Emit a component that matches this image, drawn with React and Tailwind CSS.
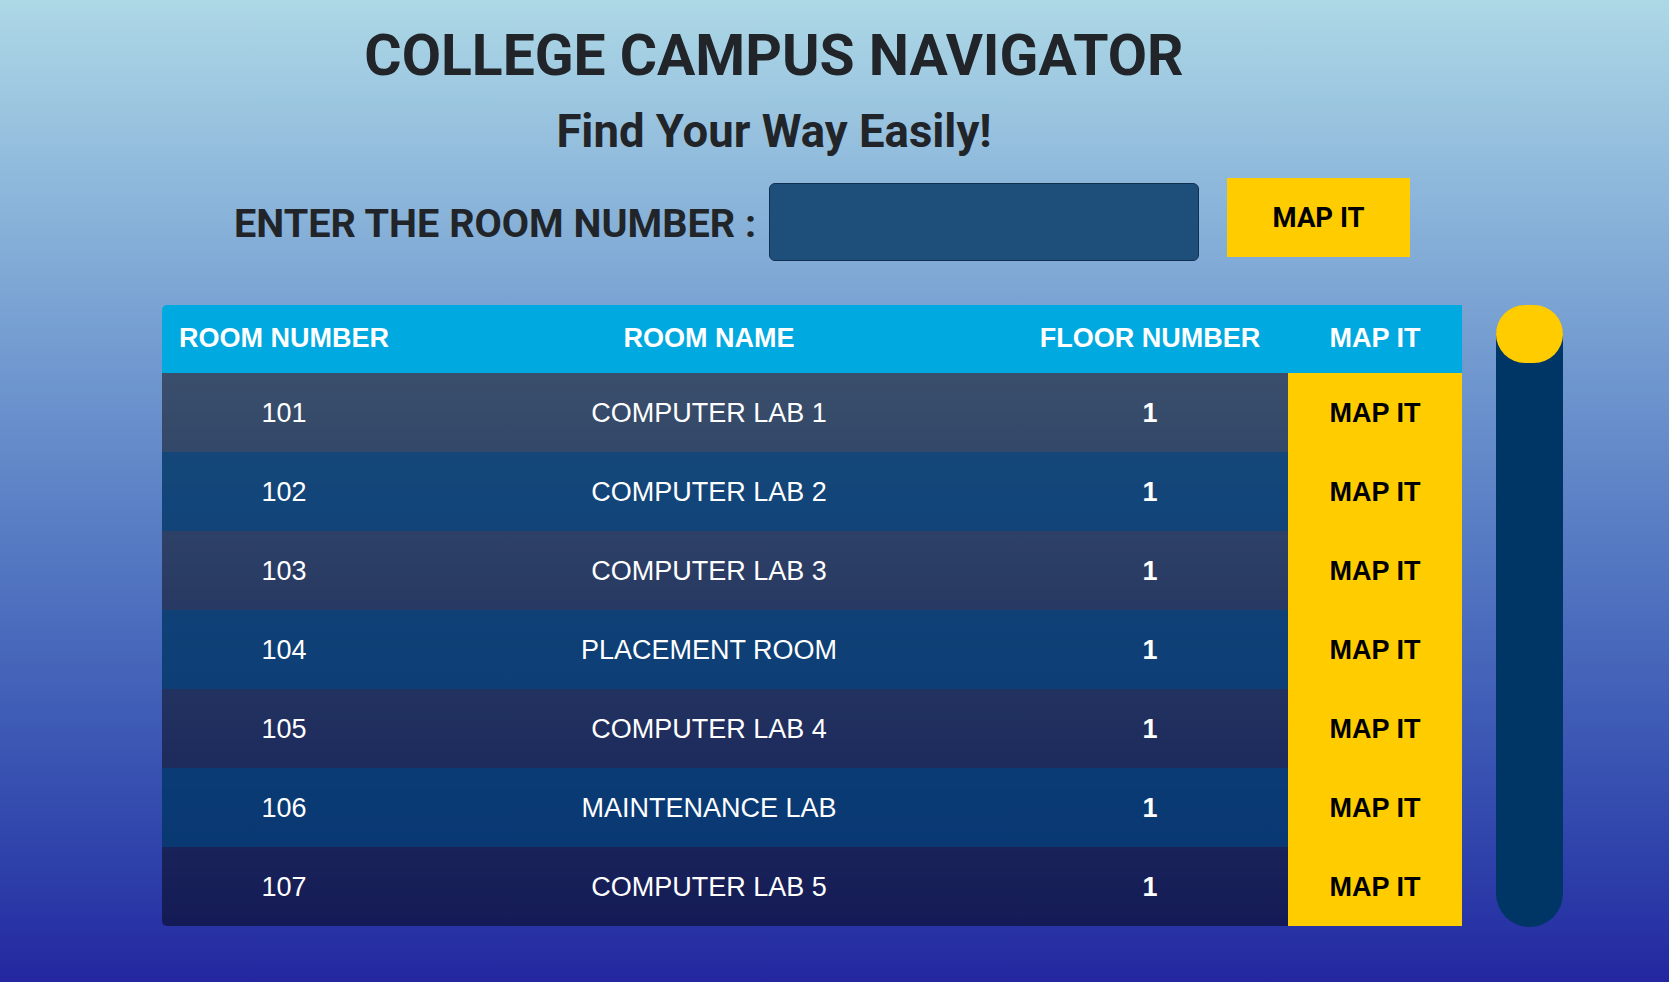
import React, { useState } from 'react'

const rooms = [
  { no: '101', name: 'COMPUTER LAB 1', floor: '1' },
  { no: '102', name: 'COMPUTER LAB 2', floor: '1' },
  { no: '103', name: 'COMPUTER LAB 3', floor: '1' },
  { no: '104', name: 'PLACEMENT ROOM', floor: '1' },
  { no: '105', name: 'COMPUTER LAB 4', floor: '1' },
  { no: '106', name: 'MAINTENANCE LAB', floor: '1' },
  { no: '107', name: 'COMPUTER LAB 5', floor: '1' },
]

const App = () => {
  const [room, setRoom] = useState('')

  return (
    <div className="h-[982px] w-full overflow-hidden bg-linear-to-b from-[#add8e6] to-[#2426a0] font-['Roboto',sans-serif] text-[#212529]">
      <div className="w-[1548px] pt-[28px] text-center">
        <h1 className="text-[57px] leading-[56px] font-bold">COLLEGE CAMPUS NAVIGATOR</h1>
        <h2 className="mt-[25px] text-[45.5px] leading-[45px] font-bold">Find Your Way Easily!</h2>
      </div>

      <div className="mt-[24px] flex items-start pl-[234px]">
        <label className="mt-[26px] text-[39.6px] leading-[40px] font-bold whitespace-nowrap">ENTER THE ROOM NUMBER :</label>
        <input
          value={room}
          onChange={(e) => setRoom(e.target.value)}
          className="mt-[5px] ml-[13px] h-[78px] w-[430px] rounded-[6px] border border-[#10304f] bg-[#1d4f7a] px-4 text-[28px] text-white outline-none"
        />
        <button className="ml-[28px] h-[79px] w-[183px] bg-[#ffcc00] text-[27.5px] font-bold text-black">MAP IT</button>
      </div>

      <div className="mt-[44px] flex items-start pl-[162px]">
        <div className="w-[1300px] overflow-hidden rounded-l-[5px] font-['Liberation_Sans',Arial,sans-serif] text-[27px] text-white">
          <table className="w-full table-fixed border-collapse">
            <colgroup>
              <col className="w-[244px]" />
              <col className="w-[606px]" />
              <col className="w-[276px]" />
              <col className="w-[174px]" />
            </colgroup>
            <thead>
              <tr className="h-[68px] bg-[#00a9e0] font-bold">
                <th className="p-0 pb-[2px] text-center">ROOM NUMBER</th>
                <th className="p-0 pb-[2px] text-center">ROOM NAME</th>
                <th className="p-0 pb-[2px] text-center">FLOOR NUMBER</th>
                <th className="p-0 pb-[2px] text-center">MAP IT</th>
              </tr>
            </thead>
            <tbody>
              {rooms.map((r, i) => (
                <tr key={r.no} className={i % 2 === 0 ? 'h-[79px] bg-[#000000]/48' : 'h-[79px] bg-[#003665]/80'}>
                  <td className="p-0 pt-[1px] text-center">{r.no}</td>
                  <td className="p-0 pt-[1px] text-center">{r.name}</td>
                  <td className="p-0 pt-[1px] text-center font-bold">{r.floor}</td>
                  <td className="bg-[#ffcc00] p-0 pt-[2px] text-center font-bold text-black">MAP IT</td>
                </tr>
              ))}
            </tbody>
          </table>
        </div>

        <div className="ml-[34px] h-[622px] w-[67px] rounded-full bg-[#003665]">
          <div className="h-[58px] w-full rounded-full bg-[#ffcc00]" />
        </div>
      </div>
    </div>
  )
}

export default App
